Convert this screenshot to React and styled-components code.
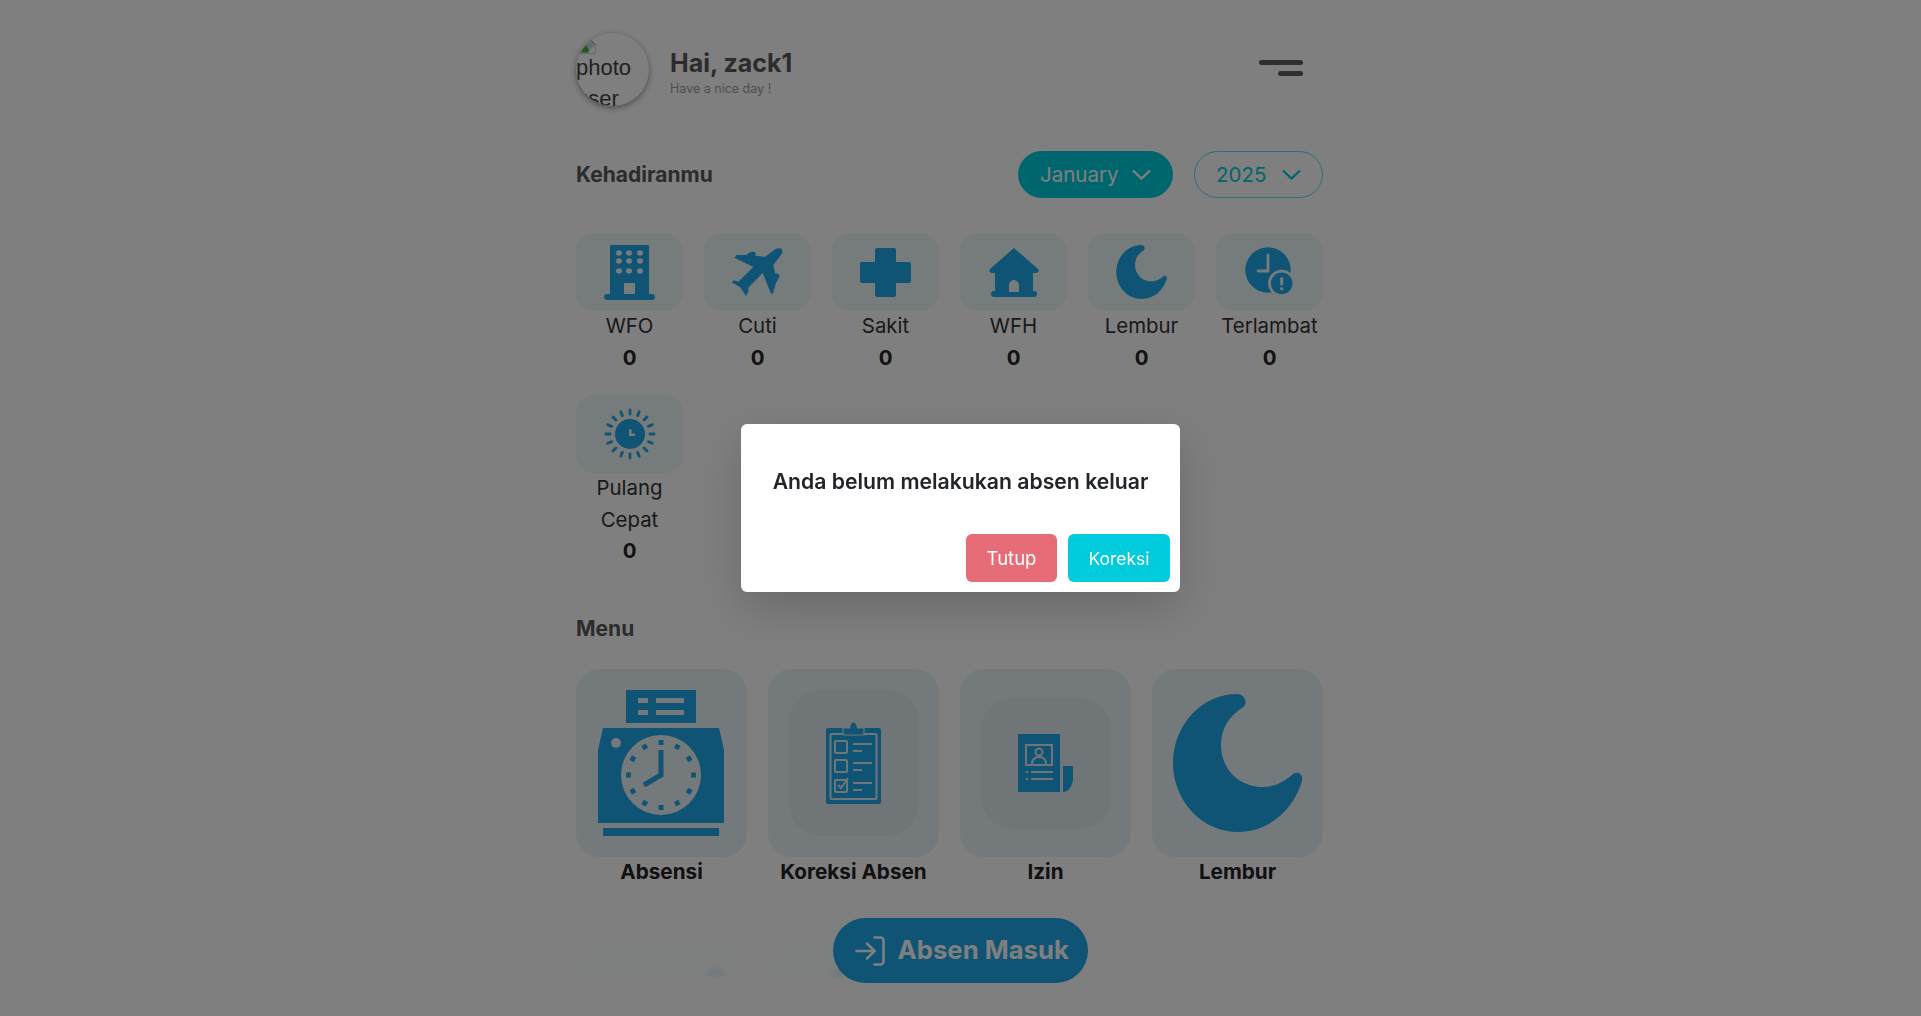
import React from "react";
import styled, { createGlobalStyle } from "styled-components";
import { LogIn } from "lucide-react";

const BLUE = "#1ea8ea";
const TILE = "#ecf8f9";
const CARD = "#e9f3f8";
const INNER = "#e0ecf1";
const CYAN = "#00ccdd";

const GlobalStyle = createGlobalStyle`
  html, body {
    margin: 0;
    height: 100%;
    overflow: hidden;
    background: #ffffff;
    font-family: "Inter", "Liberation Sans", sans-serif;
  }
`;

const Page = styled.div`
  width: 747px;
  margin: 0 auto;
  padding: 32px 22px 0 0;
`;

const Header = styled.header`
  display: flex;
  align-items: center;
  justify-content: space-between;
  height: 74px;
`;

const UserInfo = styled.div`
  display: flex;
  align-items: center;
  gap: 21px;
`;

const Avatar = styled.div`
  width: 73px;
  height: 73px;
  border-radius: 50%;
  overflow: hidden;
  box-shadow: 0 2px 6px rgba(0, 0, 0, 0.4);
  font-family: "Liberation Sans", sans-serif;
  font-size: 22px;
  line-height: 31px;
  color: #444444;
  box-sizing: border-box;
  padding-top: 5px;
`;

const BrokenImage = styled.svg`
  display: block;
  margin: 0 0 -2px 3px;
`;

const UserText = styled.div`
  padding-top: 5px;
`;

const Greeting = styled.h1`
  margin: 0;
  font-size: 25px;
  line-height: 32px;
  font-weight: 700;
  color: #585858;
`;

const Subtitle = styled.p`
  margin: 2px 0 0;
  font-size: 12.5px;
  line-height: 16px;
  color: #9c9c9c;
`;

const MenuToggle = styled.button`
  display: flex;
  flex-direction: column;
  align-items: flex-end;
  gap: 6px;
  padding: 0;
  margin: 0 20px 2px 0;
  border: none;
  background: none;
`;

const ToggleBar = styled.span`
  display: block;
  height: 5px;
  width: ${(props) => props.$width}px;
  border-radius: 3px;
  background: #5e5e5e;
`;

const TitleRow = styled.div`
  display: flex;
  align-items: center;
  justify-content: space-between;
  margin-top: 45px;
`;

const SectionTitle = styled.h2`
  margin: 0;
  font-size: 21px;
  line-height: 32px;
  font-weight: 700;
  color: #585858;
`;

const Selects = styled.div`
  display: flex;
  gap: 21px;
`;

const Select = styled.div`
  display: flex;
  align-items: center;
  justify-content: space-between;
  box-sizing: border-box;
  height: 47px;
  width: ${(props) => props.$width}px;
  padding: 0 21px;
  border-radius: 24px;
  border: 1px solid ${(props) => (props.$filled ? CYAN : "rgba(0, 204, 221, 0.65)")};
  background: ${(props) => (props.$filled ? CYAN : "transparent")};
  color: ${(props) => (props.$filled ? "#ffffff" : CYAN)};
  font-size: 20.5px;
`;

const StatGrid = styled.div`
  display: grid;
  grid-template-columns: repeat(6, 1fr);
  gap: 22px 21px;
  margin-top: 35px;
`;

const Stat = styled.div`
  text-align: center;
  font-size: 20.4px;
  line-height: 31.5px;
  color: #333333;
`;

const StatIcon = styled.div`
  display: flex;
  align-items: center;
  justify-content: center;
  height: 78px;
  margin-bottom: -1px;
  border-radius: 18px;
  background: ${TILE};
`;

const StatValue = styled.div`
  font-weight: 700;
  color: #222222;
`;

const MenuTitle = styled(SectionTitle)`
  margin: 46.5px 0 24px;
`;

const MenuGrid = styled.div`
  display: grid;
  grid-template-columns: repeat(4, 1fr);
  gap: 54px 21px;
`;

const MenuItem = styled.div`
  text-align: center;
  font-size: 20.7px;
  line-height: 29px;
  font-weight: 700;
  color: #222222;
`;

const MenuCard = styled.div`
  display: flex;
  align-items: center;
  justify-content: center;
  box-sizing: border-box;
  height: 188px;
  border-radius: 24px;
  background: ${CARD};
`;

const PeekCard = styled(MenuCard)`
  align-items: flex-start;
  justify-content: flex-start;
  padding: 28px 0 0 ${(props) => props.$offset}px;
`;

const MenuInner = styled.div`
  display: flex;
  align-items: center;
  justify-content: center;
  width: 130px;
  height: ${(props) => props.$height}px;
  border-radius: 32px;
  background: ${INNER};
`;

const BottomBar = styled.div`
  position: fixed;
  left: 0;
  right: 0;
  bottom: 0;
  height: 121px;
  display: flex;
  justify-content: center;
  padding-top: 23px;
  box-sizing: border-box;
  background: linear-gradient(
    rgba(255, 255, 255, 0.88) 0,
    rgba(255, 255, 255, 0.88) 78px,
    #ffffff 84px
  );
  backdrop-filter: blur(2px);
`;

const CheckInButton = styled.button`
  display: flex;
  align-items: center;
  justify-content: center;
  gap: 9.5px;
  width: 255px;
  height: 65px;
  padding: 0;
  border: none;
  border-radius: 33px;
  background: ${BLUE};
  color: #ffffff;
  font-family: inherit;
  font-size: 25.7px;
  font-weight: 700;
`;

const CheckInLabel = styled.span`
  padding-bottom: 3px;
`;

const Backdrop = styled.div`
  position: fixed;
  inset: 0;
  display: flex;
  align-items: center;
  justify-content: center;
  background: rgba(0, 0, 0, 0.5);
`;

const Modal = styled.div`
  box-sizing: border-box;
  width: 439px;
  height: 168px;
  padding: 0 10px 10px;
  display: flex;
  flex-direction: column;
  justify-content: space-between;
  border-radius: 6px;
  background: #ffffff;
  box-shadow: 0 16px 48px rgba(0, 0, 0, 0.175);
`;

const ModalText = styled.p`
  margin: 41px 0 0;
  text-align: center;
  font-size: 21.2px;
  line-height: 32px;
  font-weight: 600;
  color: #212529;
`;

const ModalActions = styled.div`
  display: flex;
  justify-content: flex-end;
  gap: 11px;
`;

const ModalButton = styled.button`
  height: 48px;
  width: ${(props) => props.$width}px;
  padding: 0;
  border: none;
  border-radius: 6px;
  background: ${(props) => props.$color};
  color: #ffffff;
  font-family: inherit;
  font-size: ${(props) => props.$size}px;
`;

const Chevron = () => (
  <svg width="19" height="11" viewBox="0 0 19 11" fill="none" stroke="currentColor" strokeWidth="2.4">
    <path d="M1 1.5L9.500 9.500L18 1.5" />
  </svg>
);

const BuildingIcon = () => (
  <svg width="51" height="55" viewBox="0 0 51 55" fill={BLUE}>
    <rect x="6" y="0" width="39" height="52" rx="1" />
    <rect x="0" y="49" width="51" height="6" rx="3" />
    {[15, 25, 36].map((cx) =>
      [8, 16, 26].map((cy) => <ellipse key={`${cx}-${cy}`} cx={cx} cy={cy} rx="3" ry="2.8" fill={TILE} />)
    )}
    <rect x="20" y="38" width="11" height="11" fill={TILE} />
  </svg>
);

const PlaneIcon = () => (
  <svg width="55" height="50" viewBox="30 18 165 150" fill={BLUE}>
    <path d="M178 22C188 22 190 32 183 42L160 72L166 98C172 96 180 100 178 108L168 126L158 160L152 155L128 96L85 140L85 152L78 165L60 138L35 124L42 118L55 122L100 78L43 50L50 42L80 42C85 32 105 28 108 38L105 44L135 48L158 30C165 24 172 22 178 22Z" />
  </svg>
);

const CrossIcon = () => (
  <svg width="51" height="49" viewBox="0 0 51 49" fill={BLUE}>
    <rect x="15" y="0" width="21" height="49" rx="2" />
    <rect x="0" y="14" width="51" height="21" rx="2" />
  </svg>
);

const HouseIcon = () => (
  <svg width="50" height="49" viewBox="0 0 50 49" fill={BLUE}>
    <path d="M25 0L49 21C50.500 23 49.500 25 47 25H44V45H6V25H3C0.500 25 -0.500 23 1 21Z" />
    <rect x="2" y="43" width="46" height="6" rx="3" />
    <path d="M20 44V37C20 34 23 32 25 32C27 32 30 34 30 37V44Z" fill={TILE} />
  </svg>
);

const MoonIcon = ({ width = 51, height = 54 }) => (
  <svg width={width} height={height} viewBox="0 0 129 138" fill={BLUE}>
    <path d="M64 0C72 0 76 10 69 14C56 22 48 35 48 51C48 75 66 93 90 93C101 93 111 88 119 81C124 76 131 80 129 87C120 117 95 138 65 138C29 138 0 107 0 69C0 31 29 0 64 0Z" />
  </svg>
);

const LateIcon = () => (
  <svg width="70" height="64" viewBox="0 0 70 64" fill={BLUE}>
    <circle cx="33" cy="30" r="22.700" />
    <path d="M33 15V31H23" fill="none" stroke={TILE} strokeWidth="2.800" strokeLinecap="round" strokeLinejoin="round" />
    <circle cx="46.700" cy="43.300" r="12.200" stroke={TILE} strokeWidth="2.800" />
    <rect x="45.200" y="37" width="3" height="8.500" rx="1.500" fill={TILE} />
    <circle cx="46.700" cy="48.800" r="1.700" fill={TILE} />
  </svg>
);

const SunIcon = () => (
  <svg width="52" height="52" viewBox="0 0 52 52" fill={BLUE}>
    {Array.from({ length: 16 }, (_, i) => (
      <rect key={i} x="24.600" y="0.500" width="2.800" height="7" rx="1.400" transform={`rotate(${i * 22.5} 26 26)`} />
    ))}
    <circle cx="26" cy="26" r="15" />
    <path d="M25 21.500H27.500V25.500H31V28H25Z" fill={TILE} />
  </svg>
);

const PunchClockSvg = styled.svg`
  margin-right: 2px;
`;

const PunchClockIcon = () => (
  <PunchClockSvg width="126" height="146" viewBox="0 0 126 146" fill={BLUE}>
    <rect x="28" y="0" width="70" height="33" />
    <g fill={CARD}>
      <rect x="40" y="8" width="10" height="5" />
      <rect x="58" y="8" width="28" height="5" />
      <rect x="40" y="20" width="10" height="5" />
      <rect x="58" y="20" width="28" height="5" />
    </g>
    <path d="M5 38H121L126 60V133H0V60Z" />
    <rect x="5" y="138" width="116" height="8" />
    <circle cx="18" cy="53" r="5" fill={CARD} />
    <circle cx="63" cy="85" r="40" fill={CARD} />
    {Array.from({ length: 12 }, (_, i) => (
      <rect key={i} x="60.500" y="50" width="5" height="5" transform={`rotate(${i * 30} 63 85)`} />
    ))}
    <path d="M63 60V85L46 95" fill="none" stroke={BLUE} strokeWidth="5" />
  </PunchClockSvg>
);

const ClipboardIcon = () => (
  <svg width="55" height="82" viewBox="0 0 55 82" fill={BLUE}>
    <rect x="0" y="6" width="55" height="76" rx="2" />
    <g fill="none" stroke={INNER} strokeWidth="2">
      <rect x="4.500" y="12" width="46" height="65" rx="1" />
      <rect x="9" y="19" width="12" height="12" rx="1" />
      <rect x="9" y="38" width="12" height="12" rx="1" />
      <rect x="9" y="58" width="12" height="12" rx="1" />
      <path d="M12 63L15 66L22 56" />
      <path d="M27 22H46M27 29H36M27 41H46M27 48H36M27 61H46M27 68H36" />
    </g>
    <path d="M17 13V6H23.500C24 2 26 0 27.500 0C29 0 31 2 31.500 6H38V13Z" stroke={INNER} strokeWidth="1.200" />
  </svg>
);

const PermitIcon = () => (
  <svg width="55" height="58" viewBox="0 0 55 58" fill={BLUE}>
    <rect x="0" y="0" width="42" height="58" />
    <path d="M45 32H55V44C55 52 50 58 45 58Z" />
    <g fill="none" stroke={INNER} strokeWidth="2">
      <rect x="8" y="11" width="26" height="20" />
      <circle cx="21" cy="18" r="3.500" />
      <path d="M14 30C14 25 17 23 21 23C25 23 28 25 28 30" />
      <path d="M13 38H35M13 45H35" />
    </g>
    <circle cx="9" cy="38" r="1.200" fill={INNER} />
    <circle cx="9" cy="45" r="1.200" fill={INNER} />
  </svg>
);

const PeekIcon = () => (
  <svg width="24" height="30" viewBox="0 0 24 30" fill={BLUE}>
    <ellipse cx="13" cy="16" rx="11" ry="16" />
  </svg>
);

const stats = [
  { label: "WFO", icon: <BuildingIcon /> },
  { label: "Cuti", icon: <PlaneIcon /> },
  { label: "Sakit", icon: <CrossIcon /> },
  { label: "WFH", icon: <HouseIcon /> },
  { label: "Lembur", icon: <MoonIcon /> },
  { label: "Terlambat", icon: <LateIcon /> },
  { label: "Pulang Cepat", icon: <SunIcon /> },
];

function App() {
  return (
    <>
      <GlobalStyle />
      <Page>
        <Header>
          <UserInfo>
            <Avatar>
              <BrokenImage width="17" height="16" viewBox="0 0 17 16">
                <path d="M1 1H11L16 6V15H1Z" fill="#c8d4e6" stroke="#9aa5b5" />
                <path d="M2 14L7 7L11 14Z" fill="#4caf2f" />
                <path d="M9 14L16 7V15H9Z" fill="#ffffff" />
              </BrokenImage>
              photo user
            </Avatar>
            <UserText>
              <Greeting>Hai, zack1</Greeting>
              <Subtitle>Have a nice day !</Subtitle>
            </UserText>
          </UserInfo>
          <MenuToggle>
            <ToggleBar $width={44} />
            <ToggleBar $width={25} />
          </MenuToggle>
        </Header>

        <TitleRow>
          <SectionTitle>Kehadiranmu</SectionTitle>
          <Selects>
            <Select $filled $width={155}>
              January <Chevron />
            </Select>
            <Select $width={129}>
              2025 <Chevron />
            </Select>
          </Selects>
        </TitleRow>

        <StatGrid>
          {stats.map((stat) => (
            <Stat key={stat.label}>
              <StatIcon>{stat.icon}</StatIcon>
              {stat.label}
              <StatValue>0</StatValue>
            </Stat>
          ))}
        </StatGrid>

        <MenuTitle>Menu</MenuTitle>
        <MenuGrid>
          <MenuItem>
            <MenuCard>
              <PunchClockIcon />
            </MenuCard>
            Absensi
          </MenuItem>
          <MenuItem>
            <MenuCard>
              <MenuInner $height={146}>
                <ClipboardIcon />
              </MenuInner>
            </MenuCard>
            Koreksi Absen
          </MenuItem>
          <MenuItem>
            <MenuCard>
              <MenuInner $height={131}>
                <PermitIcon />
              </MenuInner>
            </MenuCard>
            Izin
          </MenuItem>
          <MenuItem>
            <MenuCard>
              <MoonIcon width={129} height={138} />
            </MenuCard>
            Lembur
          </MenuItem>
          <MenuItem>
            <PeekCard $offset={127}>
              <PeekIcon />
            </PeekCard>
          </MenuItem>
          <MenuItem>
            <PeekCard $offset={59}>
              <PeekIcon />
            </PeekCard>
          </MenuItem>
        </MenuGrid>
      </Page>

      <BottomBar>
        <CheckInButton>
          <LogIn size={36} strokeWidth={1.7} />
          <CheckInLabel>Absen Masuk</CheckInLabel>
        </CheckInButton>
      </BottomBar>

      <Backdrop>
        <Modal>
          <ModalText>Anda belum melakukan absen keluar</ModalText>
          <ModalActions>
            <ModalButton $width={91} $color="#e66c78" $size={18.5}>
              Tutup
            </ModalButton>
            <ModalButton $width={102} $color={CYAN} $size={17.5}>
              Koreksi
            </ModalButton>
          </ModalActions>
        </Modal>
      </Backdrop>
    </>
  );
}

export default App;
